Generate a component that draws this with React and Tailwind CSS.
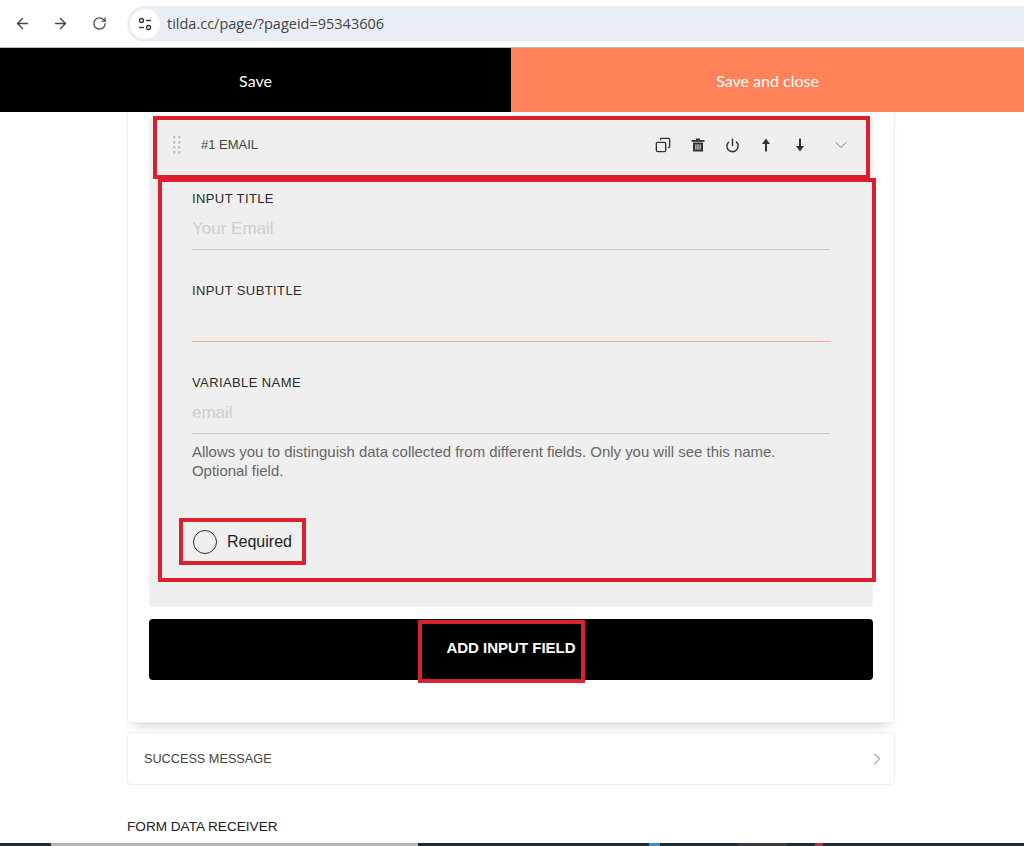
import React from 'react';
import { ArrowLeft, ArrowRight, RotateCw, Copy, Power, ChevronDown, ChevronRight } from 'lucide-react';

const FieldLabel = ({ children }) => (
  <div className="text-[13px] leading-[16px] tracking-[0.4px] text-[#2a2a2a]">{children}</div>
);

const App = () => {
  return (
    <div className="relative h-[846px] w-[1024px] overflow-hidden bg-white font-['Liberation_Sans',sans-serif]">
      {/* browser bar */}
      <div className="flex h-[48px] items-center border-b border-[#b9b9b9] bg-white pl-[14px]">
        <ArrowLeft size={17} className="text-[#474747]" />
        <ArrowRight size={17} className="ml-[21px] text-[#474747]" />
        <RotateCw size={15} className="ml-[23px] text-[#474747]" />
        <div className="ml-[20px] flex h-[36px] flex-1 items-center rounded-l-full bg-[#e9eef6] pl-[3px]">
          <div className="flex h-[30px] w-[30px] items-center justify-center rounded-full bg-white">
            <svg width="14" height="14" viewBox="0 0 14 14" fill="none" stroke="#333" strokeWidth="1.4">
              <circle cx="3.5" cy="3.5" r="2" />
              <path d="M8 3.5h5" />
              <path d="M1 10.5h5" />
              <circle cx="10.5" cy="10.5" r="2" />
            </svg>
          </div>
          <span className="ml-[7px] font-['Open_Sans',sans-serif] text-[14.5px] text-[#444]">tilda.cc/page/?pageid=95343606</span>
        </div>
      </div>

      {/* save bar */}
      <div className="flex h-[64px] font-['Lato',sans-serif] text-[16px] text-white">
        <div className="flex w-[511px] items-center justify-center bg-black pt-[2px]">Save</div>
        <div className="flex flex-1 items-center justify-center bg-[#ff8259] pt-[2px]">Save and close</div>
      </div>

      {/* form settings card */}
      <div className="mx-[127px] flex h-[611px] w-[768px] flex-col rounded-b-[4px] border-x border-b border-[#eeeeee] px-[21px] pt-[6px] shadow-[0_9px_10px_-7px_rgba(0,0,0,0.2)]">
        <div className="h-[489px] rounded-b-[4px] bg-[#efefef]">
          <div className="flex h-[54px] items-center pl-[23px] pr-[22px]">
            <svg width="10" height="20" viewBox="0 0 10 20" fill="#c4c4c4">
              <rect x="1" y="1" width="2.5" height="2.5" />
              <rect x="6" y="1" width="2.5" height="2.5" />
              <rect x="1" y="6" width="2.5" height="2.5" />
              <rect x="6" y="6" width="2.5" height="2.5" />
              <rect x="1" y="11" width="2.5" height="2.5" />
              <rect x="6" y="11" width="2.5" height="2.5" />
              <rect x="1" y="16" width="2.5" height="2.5" />
              <rect x="6" y="16" width="2.5" height="2.5" />
            </svg>
            <span className="ml-[19px] text-[13px] text-[#444]">#1 EMAIL</span>
            <div className="ml-auto flex items-center text-[#333]">
              <Copy size={16} strokeWidth={2} className="-scale-x-100" />
              <svg width="14" height="14" viewBox="0 0 14 14" fill="#333" className="ml-[20px]">
                <rect x="5" y="0.5" width="4" height="1.6" />
                <rect x="0.5" y="2" width="13" height="1.8" />
                <path d="M2 4.6h10V13.5H2zM4.4 6.2v5.6h1V6.2zM6.5 6.2v5.6h1V6.2zM8.6 6.2v5.6h1V6.2z" fillRule="evenodd" />
              </svg>
              <Power size={15} strokeWidth={2.3} className="ml-[20px]" />
              <svg width="12" height="14" viewBox="0 0 12 14" fill="#333" className="ml-[20px]">
                <path d="M6 0.5L10 6H7V13.5H5V6H2Z" />
              </svg>
              <svg width="12" height="14" viewBox="0 0 12 14" fill="#333" className="ml-[22px]">
                <path d="M6 13.5L10 8H7V0.5H5V8H2Z" />
              </svg>
              <ChevronDown size={20} strokeWidth={1} className="ml-[25px] text-[#666]" />
            </div>
          </div>

          <div className="px-[43px] pt-[19px]">
            <FieldLabel>INPUT TITLE</FieldLabel>
            <div className="h-[43px] border-b border-[#c9c9c9] pt-[11px] text-[17px] leading-[22px] text-[#cdcdcd]">Your Email</div>

            <div className="mt-[33px]">
              <FieldLabel>INPUT SUBTITLE</FieldLabel>
            </div>
            <div className="mt-[42px] h-px bg-[#f5a98a]"></div>

            <div className="mt-[33px]">
              <FieldLabel>VARIABLE NAME</FieldLabel>
            </div>
            <div className="h-[43px] border-b border-[#c9c9c9] pt-[11px] text-[17px] leading-[22px] text-[#cdcdcd]">email</div>

            <p className="mt-[8px] text-[14.95px] leading-[19px] text-[#666]">
              Allows you to distinguish data collected from different fields. Only you will see this name.
              <br />
              Optional field.
            </p>

            <div className="ml-[1px] mt-[50px] flex items-center">
              <div className="h-[24px] w-[24px] rounded-full border border-[#333]"></div>
              <span className="ml-[10px] text-[16px] text-[#222]">Required</span>
            </div>
          </div>
        </div>

        <div className="mt-[12px] flex h-[61px] items-center justify-center rounded-[4px] bg-black pb-[2px] text-[15px] font-bold text-white">
          ADD INPUT FIELD
        </div>
      </div>

      {/* success message */}
      <div className="mx-[127px] mt-[9px] flex h-[53px] w-[768px] items-center justify-between rounded-[4px] border border-[#eeeeee] pl-[16px] pr-[7px]">
        <span className="pt-[3px] text-[12.7px] text-[#444]">SUCCESS MESSAGE</span>
        <ChevronRight size={20} strokeWidth={1} className="text-[#555]" />
      </div>

      <div className="mx-[127px] mt-[34px] text-[13.6px] leading-[16px] text-[#222]">FORM DATA RECEIVER</div>

      {/* taskbar sliver */}
      <div className="absolute bottom-0 left-0 flex h-[3px] w-full bg-[#1f2a33]">
        <div className="ml-[51px] w-[367px] bg-[#b5b5b5]"></div>
        <div className="ml-[231px] w-[11px] bg-[#3f8fc4]"></div>
        <div className="ml-[78px] w-[49px] bg-[#3a3d42]"></div>
        <div className="ml-[28px] w-[8px] bg-[#a03a44]"></div>
      </div>

      {/* annotation boxes drawn over the page */}
      <div className="pointer-events-none absolute left-[153px] top-[116px] h-[63px] w-[717px] border-[4px] border-[#dc1f2e]"></div>
      <div className="pointer-events-none absolute left-[158px] top-[178px] h-[404px] w-[718px] border-[4px] border-[#dc1f2e]"></div>
      <div className="pointer-events-none absolute left-[179px] top-[518px] h-[47px] w-[127px] border-[4px] border-[#d8232f]"></div>
      <div className="pointer-events-none absolute left-[418px] top-[620px] h-[63px] w-[167px] border-[4px] border-[#d8232f]"></div>
    </div>
  );
};

export default App;
